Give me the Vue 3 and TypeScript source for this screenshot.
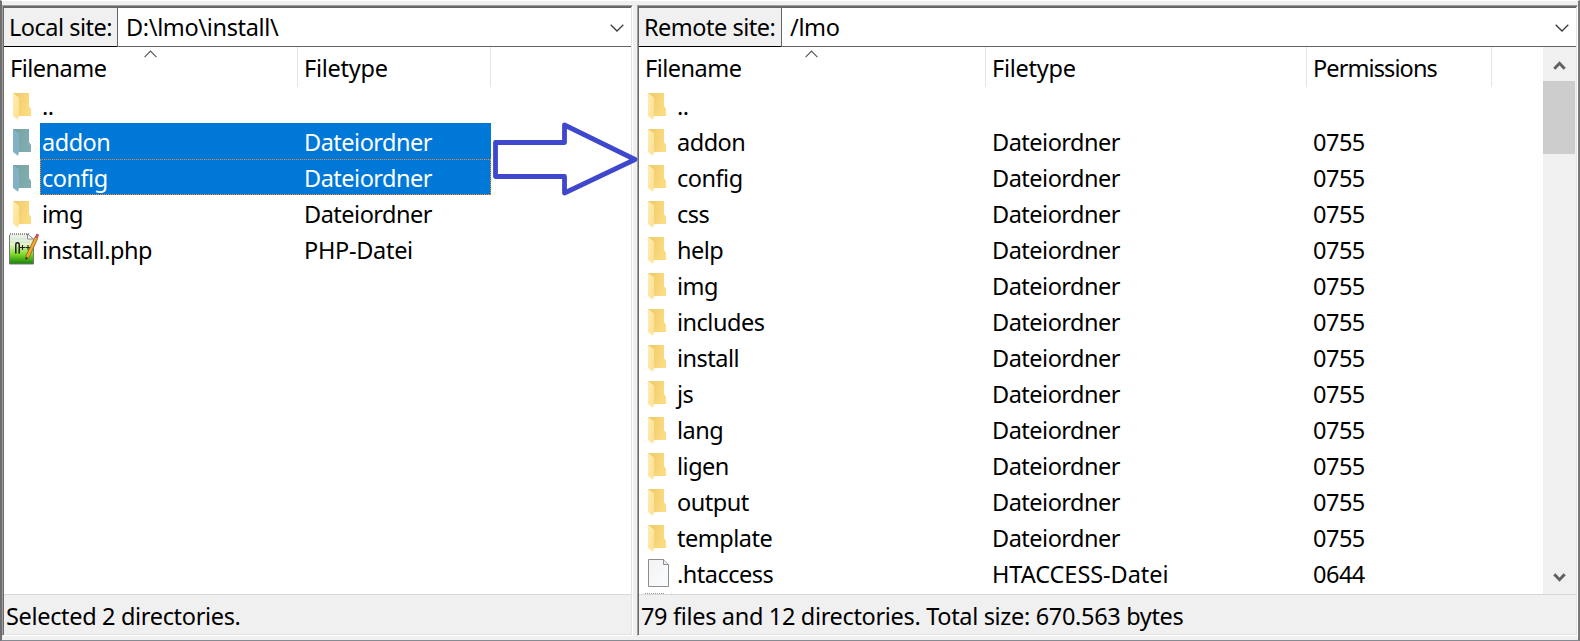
<script setup lang="ts">
interface Entry {
  name: string
  type?: string
  perms?: string
  icon: 'folder' | 'file' | 'php'
  selected?: boolean
  focused?: boolean
}

interface Pane {
  id: string
  label: string
  path: string
  columns: string[]
  rows: Entry[]
  status: string
  scroll: boolean
}

const dir = (name: string): Entry => ({ name, type: 'Dateiordner', perms: '0755', icon: 'folder' })
const remoteDirs = ['addon', 'config', 'css', 'help', 'img', 'includes', 'install', 'js', 'lang', 'ligen', 'output', 'template']

const panes: Pane[] = [
  {
    id: 'local',
    label: 'Local site:',
    path: 'D:\\lmo\\install\\',
    columns: ['Filename', 'Filetype'],
    rows: [
      { name: '..', icon: 'folder' },
      { name: 'addon', type: 'Dateiordner', icon: 'folder', selected: true },
      { name: 'config', type: 'Dateiordner', icon: 'folder', selected: true, focused: true },
      { name: 'img', type: 'Dateiordner', icon: 'folder' },
      { name: 'install.php', type: 'PHP-Datei', icon: 'php' },
    ],
    status: 'Selected 2 directories.',
    scroll: false,
  },
  {
    id: 'remote',
    label: 'Remote site:',
    path: '/lmo',
    columns: ['Filename', 'Filetype', 'Permissions'],
    rows: [
      { name: '..', icon: 'folder' },
      ...remoteDirs.map(dir),
      { name: '.htaccess', type: 'HTACCESS-Datei', perms: '0644', icon: 'file' },
      { name: '', icon: 'php' },
    ],
    status: '79 files and 12 directories. Total size: 670.563 bytes',
    scroll: true,
  },
]
</script>

<template>
  <div class="window">
    <svg width="0" height="0" class="defs">
      <defs>
        <linearGradient id="fold" x1="0" y1="0" x2="1" y2="0.3">
          <stop offset="0" stop-color="#eec765" /><stop offset="1" stop-color="#fbdc82" />
        </linearGradient>
        <linearGradient id="flap" x1="0" y1="0" x2="1" y2="1">
          <stop offset="0" stop-color="#ffedb0" /><stop offset="1" stop-color="#fde090" />
        </linearGradient>
        <linearGradient id="foldSel" x1="0" y1="0" x2="1" y2="0.3">
          <stop offset="0" stop-color="#76a0a0" /><stop offset="1" stop-color="#80aeb0" />
        </linearGradient>
        <linearGradient id="green" x1="0" y1="0" x2="0" y2="1">
          <stop offset="0" stop-color="#e6efec" /><stop offset="0.35" stop-color="#e4f4c4" />
          <stop offset="0.68" stop-color="#7fd928" /><stop offset="1" stop-color="#148009" />
        </linearGradient>
        <linearGradient id="paper" x1="0" y1="0" x2="1" y2="1">
          <stop offset="0" stop-color="#f2f3f4" /><stop offset="1" stop-color="#fbfcfd" />
        </linearGradient>
      </defs>
    </svg>

    <section v-for="pane in panes" :key="pane.id" class="pane" :class="pane.id">
      <div class="address">
        <label class="site">{{ pane.label }}</label>
        <div class="combo">
          <span class="path">{{ pane.path }}</span>
          <svg class="chevron" width="14" height="8" viewBox="0 0 14 8"><path d="M.7.8 7 7 13.3.8" fill="none" stroke="#3a3a3a" stroke-width="1.3" /></svg>
        </div>
      </div>

      <div class="body">
        <div class="list">
          <div class="head">
            <div v-for="(c, i) in pane.columns" :key="c" class="th" :class="'c' + i">
              <span>{{ c }}</span>
              <svg v-if="i === 0" class="sort" width="14" height="8" viewBox="0 0 14 8"><path d="M.6 7.2 6.5 1 12.4 7.2" fill="none" stroke="#555" stroke-width="1.1" /></svg>
            </div>
          </div>
          <div v-for="(r, n) in pane.rows" :key="n" class="row" :class="{ selected: r.selected }">
            <div class="icon">
              <svg v-if="r.icon === 'folder'" width="36" height="36" viewBox="0 0 36 36">
                <path d="M9 6h16v13l2 3v7H13z" :fill="r.selected ? 'url(#foldSel)' : 'url(#fold)'" />
                <path d="M9 6 15 10.5V29l-1 3.7L9 29z" :fill="r.selected ? '#80b1c5' : 'url(#flap)'" />
              </svg>
              <svg v-else-if="r.icon === 'file'" width="36" height="36" viewBox="0 0 36 36">
                <path d="M9.5 4.5h15l5 5v22h-20z" fill="url(#paper)" stroke="#8d8d8d" />
                <path d="M24.5 4.5v5h5" fill="#e8e8e8" stroke="#8d8d8d" />
              </svg>
              <svg v-else width="36" height="36" viewBox="0 0 36 36">
                <path d="M5.500 3h18L29 9v24H5.500z" fill="url(#green)" />
                <path d="M5.500 4v29h24V8.500" fill="none" stroke="#777" />
                <path d="M6 3h19" stroke="#777" stroke-width="1.600" stroke-dasharray="1 1" />
                <path d="M7 8h15M7 11h19" stroke="#d0e0e4" />
                <path d="M23.500 3v5h6z" fill="#fff" stroke="#888" />
                <path d="M11.800 22.500V13.200q0-1.400 1.700-1.400t1.700 1.400v9.300" fill="none" stroke="#111" stroke-width="1.400" />
                <path d="M16 16.500h5M18.500 14v5M21.500 16.500h5M24 14v5" stroke="#222" stroke-width="1.100" />
                <path d="m22.200 24.500 8.800-18.500 2.700 1.600-8.600 18.700-3.100 1.700z" fill="#f0a830" stroke="#875014" stroke-width=".7" />
                <path d="m31 6 1.500-3.500 2.600 1.300-1.400 3.800z" fill="#c6525b" />
                <path d="m21.500 29 .4-3 2 1z" fill="#222" />
              </svg>
            </div>
            <div class="cells" :class="{ focused: r.focused }">
              <span class="name">{{ r.name }}</span>
              <span class="type" :class="{ caps: r.icon === 'file', php: r.icon === 'php' }">{{ r.type }}</span>
              <span v-if="pane.scroll" class="perms">{{ r.perms }}</span>
            </div>
          </div>
        </div>
        <div v-if="pane.scroll" class="scrollbar">
          <svg width="32" height="34" viewBox="0 0 32 34"><path d="m11.300 21.700 5.200-5.400 5.200 5.400" fill="none" stroke="#606060" stroke-width="3" /></svg>
          <div class="thumb"></div>
          <svg class="down" width="32" height="34" viewBox="0 0 32 34"><path d="m11.300 14.300 5.200 5.400 5.200-5.400" fill="none" stroke="#606060" stroke-width="3" /></svg>
        </div>
      </div>
      <footer class="status"><span>{{ pane.status }}</span></footer>
    </section>

    <svg class="arrow" width="150" height="80" viewBox="490 120 150 80">
      <path d="M495.500 142.500H564.500V125L635 159.500 564.500 193V176.500H495.500Z" fill="#fff" stroke="#3f48cc" stroke-width="4.800" stroke-linejoin="round" />
    </svg>
  </div>
</template>

<style>
body {
  margin: 0;
  overflow: hidden;
}
</style>

<style scoped>
.window {
  position: relative;
  box-sizing: border-box;
  width: 1580px;
  height: 641px;
  display: flex;
  gap: 4px;
  padding-top: 4px;
  padding-bottom: 4px;
  background: #f0f0f0;
  border-left: 2px solid #6e6e6e;
  border-right: 2px solid #787878;
  border-top: 1px solid #fff;
  border-bottom: 1px solid #868a92;
  font: 23.5px/36px "Noto Sans", "Open Sans", sans-serif;
  letter-spacing: -0.5px;
  color: #000;
  white-space: pre;
}
.defs {
  position: absolute;
}
.pane {
  box-sizing: border-box;
  height: 631px;
  display: flex;
  flex-direction: column;
  border: 1px solid #a0a0a0;
  border-right-color: #fff;
  border-bottom-color: #fff;
  box-shadow: inset 1px 1px #696969, inset -1px -1px #e3e3e3;
  padding: 1px;
}
.local {
  width: 631px;
}
.remote {
  width: 941px;
}
.address {
  display: flex;
  height: 40px;
}
.site {
  box-sizing: border-box;
  width: 113px;
  padding: 1px 0 0 5px;
  background: #f0f0f0;
  border-top: 1px solid #696969;
  border-bottom: 1px solid #000;
}
.remote .site {
  width: 142px;
}
.combo {
  flex: 1;
  display: flex;
  justify-content: space-between;
  box-sizing: border-box;
  padding: 1px 7px 0 8px;
  background: #fff;
  border: 1px solid #646464;
  border-right: 0;
}
.path {
  letter-spacing: -0.35px;
}
.chevron {
  margin-top: 15px;
}
.body {
  height: 547px;
  display: flex;
  background: #fff;
}
.list {
  flex: 1;
  overflow: hidden;
}
.head {
  height: 40px;
  display: flex;
}
.th {
  position: relative;
  box-sizing: border-box;
  border-right: 1px solid #e5e5e5;
  padding: 3px 0 0 6px;
}
.local .c0 {
  width: 294px;
}
.local .c1 {
  width: 193px;
}
.remote .c0 {
  width: 347px;
}
.remote .c1,
.remote .type {
  width: 321px;
}
.remote .c2 {
  width: 185px;
  letter-spacing: -0.9px;
}
.c1 {
  letter-spacing: -0.25px;
}
.sort {
  position: absolute;
  top: 3px;
  left: calc(50% - 7px);
}
.row {
  display: flex;
  height: 36px;
}
.icon {
  width: 36px;
  height: 36px;
}
.cells {
  box-sizing: border-box;
  display: flex;
  width: 451px;
  height: 36px;
  padding: 1px 0 0 2px;
}
.remote .cells {
  width: 850px;
}
.name {
  width: 262px;
}
.remote .name {
  width: 315px;
}
.type.caps {
  letter-spacing: -0.05px;
}
.type.php {
  letter-spacing: -0.3px;
}
.selected .cells {
  background: #0078d7;
  color: #fff;
}
.selected .cells.focused {
  border: 1px dotted #ff8728;
  padding: 0 0 0 1px;
}
.scrollbar {
  width: 32px;
  margin-right: 1px;
  display: flex;
  flex-direction: column;
  background: #f0f0f0;
  box-shadow: 1px 0 #f0f0f0;
}
.scrollbar svg {
  display: block;
}
.thumb {
  height: 73px;
  background: #cdcdcd;
}
.down {
  margin-top: auto;
}
.status {
  flex: 1;
  box-sizing: border-box;
  border-top: 1px solid #d7d7d7;
  padding: 3px 0 0 2px;
  background: #f0f0f0;
  letter-spacing: -0.33px;
}
.arrow {
  position: absolute;
  left: 488px;
  top: 119px;
}
</style>
